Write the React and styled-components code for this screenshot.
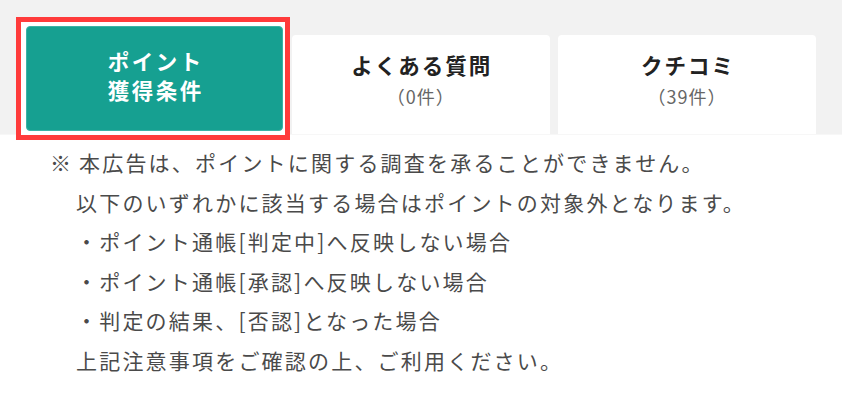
import styled, { createGlobalStyle } from "styled-components";

const GlobalStyle = createGlobalStyle`
  html, body {
    margin: 0;
    padding: 0;
    background: #fff;
  }
  body {
    font-family: "Noto Sans CJK JP", "Noto Sans", sans-serif;
  }
`;

const tabs = [
  { title: "ポイント", sub: "獲得条件", active: true },
  { title: "よくある質問", count: "（0件）" },
  { title: "クチコミ", count: "（39件）" },
];

const notes = [
  { text: "以下のいずれかに該当する場合はポイントの対象外となります。" },
  { text: "・ポイント通帳[判定中]へ反映しない場合" },
  { text: "・ポイント通帳[承認]へ反映しない場合" },
  { text: "・判定の結果、[否認]となった場合" },
  { text: "上記注意事項をご確認の上、ご利用ください。" },
];

function Tab({ tab }) {
  if (tab.active) {
    return (
      <ActiveTab>
        <ActiveLine>{tab.title}</ActiveLine>
        <ActiveLine>{tab.sub}</ActiveLine>
      </ActiveTab>
    );
  }
  return (
    <PlainTab>
      <TabTitle>{tab.title}</TabTitle>
      <TabCount>{tab.count}</TabCount>
    </PlainTab>
  );
}

export default function App() {
  return (
    <>
      <GlobalStyle />
      <Page>
        <TabBar>
          {tabs.map((t) => (
            <Tab key={t.title} tab={t} />
          ))}
        </TabBar>
        <Notes>
          <FirstLine>
            <Mark>※</Mark>本広告は、ポイントに関する調査を承ることができません。
          </FirstLine>
          {notes.map((n) => (
            <Line key={n.text}>{n.text}</Line>
          ))}
        </Notes>
      </Page>
    </>
  );
}

const Page = styled.div`
  width: 842px;
  height: 405px;
  background: #fff;
  overflow: hidden;
`;

const TabBar = styled.div`
  display: flex;
  align-items: flex-end;
  gap: 8.5px;
  height: 135px;
  padding: 0 26px 0 25.5px;
  box-sizing: border-box;
  background: #f2f2f2;
  border-bottom: 1px solid #f7f7f7;
  isolation: isolate;
`;

const ActiveTab = styled.div`
  position: relative;
  width: 258px;
  height: 105px;
  margin-bottom: 3px;
  box-sizing: border-box;
  padding-bottom: 7px;
  display: flex;
  flex-direction: column;
  align-items: center;
  justify-content: center;
  background: #16a091;
  border: 1px solid #3bb3a6;
  border-radius: 4px;

  &::before {
    content: "";
    position: absolute;
    top: -10.5px;
    left: -10.5px;
    right: -8px;
    bottom: -10px;
    background: #fff;
    border: 5px solid #ff3b3b;
    z-index: -1;
  }
`;

const ActiveLine = styled.div`
  color: #fff;
  font-size: 21.5px;
  font-weight: 700;
  line-height: 29px;
  letter-spacing: 2.5px;
  margin-right: -2.5px;
`;

const PlainTab = styled.div`
  width: 258px;
  height: 99px;
  box-sizing: border-box;
  padding-top: 15px;
  display: flex;
  flex-direction: column;
  align-items: center;
  background: #fff;
  border-radius: 4px 4px 0 0;
`;

const TabTitle = styled.div`
  color: #222;
  font-size: 21.5px;
  font-weight: 700;
  line-height: 30px;
  letter-spacing: 2px;
  margin-right: -2px;
`;

const TabCount = styled.div`
  color: #666;
  font-size: 18px;
  line-height: 32px;
  letter-spacing: 1px;
`;

const Notes = styled.div`
  padding: 8px 0 0 76px;
  color: #4a4a4a;
  font-size: 21px;
  line-height: 39.5px;
  letter-spacing: 2.2px;
`;

const Line = styled.div`
  white-space: nowrap;
`;

const FirstLine = styled(Line)`
  margin-left: -26px;
`;

const Mark = styled.span`
  display: inline-block;
  width: 29px;
`;
